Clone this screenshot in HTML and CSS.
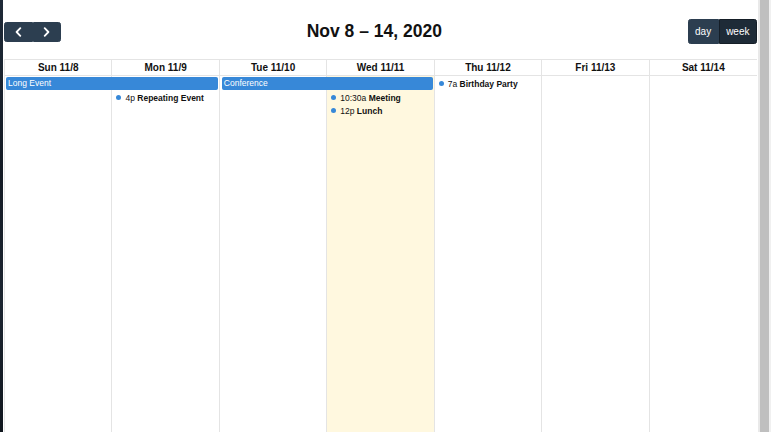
FILE: index.html
```html
<!DOCTYPE html>
<html lang="en">
<head>
<meta charset="utf-8">
<title>Calendar</title>
<link rel="stylesheet" href="styles.css">
</head>
<body>
<div class="page">
  <div class="edge"></div>
  <div class="cal">
    <div class="toolbar">
      <div class="btn-group">
        <button class="btn btn-icon" aria-label="prev">
          <svg width="7" height="10" viewBox="0 0 7 10"><path d="M5.3 1.2 L1.6 5 L5.3 8.8" fill="none" stroke="#fff" stroke-width="1.8" stroke-linecap="round" stroke-linejoin="round"/></svg>
        </button>
        <button class="btn btn-icon" aria-label="next">
          <svg width="7" height="10" viewBox="0 0 7 10"><path d="M1.7 1.2 L5.4 5 L1.7 8.8" fill="none" stroke="#fff" stroke-width="1.8" stroke-linecap="round" stroke-linejoin="round"/></svg>
        </button>
      </div>
      <h2 class="title">Nov 8 – 14, 2020</h2>
      <div class="btn-group">
        <button class="btn">day</button>
        <button class="btn btn-active">week</button>
      </div>
    </div>
    <div class="grid">
      <div class="head">
        <div class="hcell">Sun 11/8</div>
        <div class="hcell">Mon 11/9</div>
        <div class="hcell">Tue 11/10</div>
        <div class="hcell">Wed 11/11</div>
        <div class="hcell">Thu 11/12</div>
        <div class="hcell">Fri 11/13</div>
        <div class="hcell">Sat 11/14</div>
      </div>
      <div class="body">
        <div class="day"></div>
        <div class="day"></div>
        <div class="day"></div>
        <div class="day today"></div>
        <div class="day"></div>
        <div class="day"></div>
        <div class="day"></div>

        <div class="bar bar-sun">Long Event</div>
        <div class="bar bar-tue">Conference</div>
        <div class="dot-ev ev-thu-1"><span class="dot"></span><span class="time">7a</span><span class="ev-title">Birthday Party</span></div>
        <div class="dot-ev ev-mon-2"><span class="dot"></span><span class="time">4p</span><span class="ev-title">Repeating Event</span></div>
        <div class="dot-ev ev-wed-2"><span class="dot"></span><span class="time">10:30a</span><span class="ev-title">Meeting</span></div>
        <div class="dot-ev ev-wed-3"><span class="dot"></span><span class="time">12p</span><span class="ev-title">Lunch</span></div>
      </div>
    </div>
  </div>
  <div class="scroll"></div>
</div>
</body>
</html>
```

FILE: styles.css
```css
html, body {
  margin: 0;
  padding: 0;
  background: #fff;
}

body {
  font-family: "Liberation Sans", Arial, sans-serif;
  font-size: 10px;
  color: #000;
}

.page {
  display: flex;
  height: 432px;
  overflow: hidden;
}

.edge {
  width: 3px;
  flex: none;
  background: linear-gradient(180deg, #1f2a38 0%, #141b25 40%, #1c2531 70%, #10161e 100%);
}

.cal {
  width: 754px;
  flex: none;
  padding-left: 1px;
  box-sizing: border-box;
  display: flex;
  flex-direction: column;
}

.scroll {
  flex: 1;
  background: linear-gradient(90deg, #fff 0 1px, #e9e9e9 1px 3px, #bfbfbf 3px 12px, #f0f0f0 12px 14px);
}

/* toolbar */
.toolbar {
  display: flex;
  justify-content: space-between;
  align-items: center;
  padding-top: 19px;
  margin-bottom: 15px;
}

.title {
  margin: 0;
  font-size: 17.5px;
  font-weight: bold;
  line-height: 25px;
  color: #111;
}

.btn-group {
  display: flex;
}

.btn {
  font-family: "Liberation Sans", Arial, sans-serif;
  font-size: 10px;
  line-height: 15px;
  padding: 4px 6.5px;
  margin: 0;
  border: 1px solid #2c3e50;
  background: #2c3e50;
  color: #fff;
  display: flex;
  align-items: center;
  justify-content: center;
  cursor: pointer;
}

.btn-group .btn:first-child {
  border-radius: 2.5px 0 0 2.5px;
}

.btn-group .btn:last-child {
  border-radius: 0 2.5px 2.5px 0;
}

.btn-icon {
  width: 28.5px;
  padding: 4px 0;
}

.btn-icon svg {
  display: block;
}

.btn-active {
  background: #1e2b37;
  border-color: #151e27;
}

/* grid */
.grid {
  flex: 1;
  display: flex;
  flex-direction: column;
  border-left: 1px solid #e6e6e6;
  border-right: 1px solid #e6e6e6;
  margin-right: -1px;
}

.head {
  display: grid;
  grid-template-columns: repeat(7, 1fr);
  border-top: 1px solid #e4e4e4;
  border-bottom: 1px solid #e4e4e4;
}

.hcell {
  text-align: center;
  font-weight: bold;
  font-size: 10px;
  line-height: 11px;
  padding: 2px 4px;
  border-right: 1px solid #e4e4e4;
  color: #111;
}

.hcell:last-child {
  border-right: none;
}

.body {
  flex: 1;
  display: grid;
  grid-template-columns: repeat(7, 1fr);
  grid-template-rows: 14px 13.3px 13.3px 1fr;
}

.day {
  grid-row: 1 / -1;
  border-right: 1px solid #e4e4e4;
}

.day:nth-child(7) {
  border-right: none;
}

.day:nth-child(1) { grid-column: 1; }
.day:nth-child(2) { grid-column: 2; }
.day:nth-child(3) { grid-column: 3; }
.day:nth-child(4) { grid-column: 4; }
.day:nth-child(5) { grid-column: 5; }
.day:nth-child(6) { grid-column: 6; }
.day:nth-child(7) { grid-column: 7; }

.today {
  background: #fff8df;
}

.bar {
  grid-row: 1;
  align-self: start;
  margin: 1px 1.5px 0 1px;
  background: #3788d8;
  border: 1px solid #3788d8;
  border-radius: 1.5px;
  color: #fff;
  font-size: 8.5px;
  line-height: 10.5px;
  padding: 0 1px;
  white-space: nowrap;
  overflow: hidden;
}

.bar-sun { grid-column: 1 / span 2; }
.bar-tue { grid-column: 3 / span 2; margin-left: 2px; }

.dot-ev {
  display: flex;
  align-items: center;
  align-self: start;
  font-size: 8.5px;
  line-height: 10px;
  padding: 1.5px 0 1.5px 4px;
  white-space: nowrap;
  color: #111;
}

.dot {
  width: 5px;
  height: 5px;
  border-radius: 50%;
  background: #3788d8;
  margin-right: 4px;
  flex: none;
}

.time {
  margin-right: 2.4px;
}

.ev-title {
  font-weight: bold;
}

.ev-thu-1 { grid-column: 5; grid-row: 1; margin-top: 1px; }
.ev-mon-2 { grid-column: 2; grid-row: 2; margin-top: 1px; }
.ev-wed-2 { grid-column: 4; grid-row: 2; margin-top: 1px; }
.ev-wed-3 { grid-column: 4; grid-row: 3; margin-top: 1px; }
```
